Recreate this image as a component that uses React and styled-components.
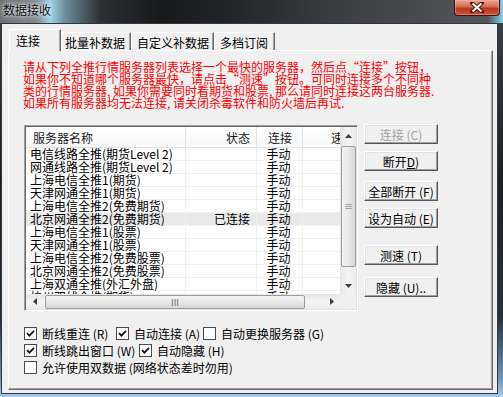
import React from "react";
import styled, { createGlobalStyle } from "styled-components";

const GlobalStyle = createGlobalStyle`
  html, body {
    margin: 0;
    padding: 0;
    background: #1e2124;
  }
  body {
    font-family: "Noto Sans CJK SC", "Liberation Sans", sans-serif;
  }
`;

const Window = styled.div`
    width: 503px;
    height: 397px;
    overflow: hidden;
    display: flex;
    flex-direction: column;
    background: linear-gradient(180deg, #3b4146 0%, #1d2023 45%, #24313c 80%, #6f9cc4 96%, #a9cbe9 100%);
    font-family: "Noto Sans CJK SC", "Liberation Sans", sans-serif;
    font-size: 12px;
    color: #000;
`

const TitleBar = styled.div`
    height: 23px;
    flex: none;
    display: flex;
    justify-content: space-between;
    align-items: flex-start;
    background: linear-gradient(90deg, #6c7074 0%, #80878c 7%, #9fd3e6 10%, #6d8d9a 13%, #2c2f32 20%, #17191b 32%, #25282b 48%, #3a3d40 66%, #48494c 82%, #54575a 97%, #7fd6f0 100%);
`

const Title = styled.div`
    padding: 3px 0 0 3px;
    font-size: 12px;
    line-height: 14px;
    color: #101010;
    text-shadow: 0 0 6px #fff, 0 0 3px rgba(255, 255, 255, 0.8);
`

const CloseButton = styled.div`
    width: 46px;
    height: 16px;
    margin-right: 3px;
    box-sizing: border-box;
    border: 1px solid #3a1008;
    border-top: none;
    border-radius: 0 0 4px 4px;
    background: linear-gradient(180deg, #e9a595 0%, #d66a52 45%, #b8361d 55%, #cc5336 100%);
    box-shadow: inset 0 0 0 1px rgba(255, 200, 180, 0.35);
    display: flex;
    align-items: center;
    justify-content: center;
`

const Client = styled.div`
    flex: 1;
    margin: 0 5px 3px 1px;
    background: #f0f0f0;
    border: 1px solid #30363b;
    padding: 5px 4px 3px 6px;
    display: flex;
    flex-direction: column;
`

const TabRow = styled.div`
    height: 21px;
    display: flex;
    align-items: flex-end;
    padding-left: 1px;
`

const Tab = styled.div`
    width: ${({ $w }) => $w}px;
    height: ${({ $active }) => ($active ? 22 : 18)}px;
    margin-bottom: ${({ $active }) => ($active ? -1 : 0)}px;
    position: relative;
    z-index: ${({ $active }) => ($active ? 1 : 0)};
    box-sizing: border-box;
    padding: ${({ $active }) => ($active ? "0 0 1px" : "1px 0 0")} ${({ $pl }) => $pl}px;
    background: #f0f0f0;
    border-top: 1px solid #fff;
    border-left: 1px solid #fff;
    border-right: 1px solid #696969;
    box-shadow: inset -1px 0 #a0a0a0;
    display: flex;
    align-items: center;
    white-space: nowrap;
    font-size: 12px;
`

const Panel = styled.div`
    flex: 1;
    border: 1px solid;
    border-color: #fff #696969 #696969 #fff;
    box-shadow: inset -1px -1px #a0a0a0;
    padding: 10px 0 0 14px;
    display: flex;
    flex-direction: column;
`

const Notice = styled.div`
    color: #ff0000;
    font-size: 12px;
    line-height: 12px;
    white-space: nowrap;
`

const NoticeLine = styled.div`
    height: 12px;
`

const Middle = styled.div`
    margin-top: 16px;
    margin-left: 1px;
    display: flex;
    gap: 6px;
`

const ListBox = styled.div`
    width: 334px;
    height: 186px;
    box-sizing: border-box;
    border: 1px solid;
    border-color: #a0a0a0 #fff #fff #a0a0a0;
    box-shadow: inset 1px 1px #696969, inset -1px -1px #e3e3e3;
    padding: 1px;
    display: grid;
    grid-template-columns: 1fr 16px;
    grid-template-rows: 1fr 15px;
`

const Viewport = styled.div`
    overflow: hidden;
    background: #fff;
`

const HeaderRow = styled.div`
    display: flex;
    height: 21px;
    background: linear-gradient(180deg, #ffffff 0%, #f7f8f9 100%);
    border-bottom: 1px solid #e2e3e5;
    box-sizing: border-box;
`

const HeaderCell = styled.div`
    flex: none;
    width: ${({ $w }) => $w}px;
    box-sizing: border-box;
    padding: 0 6px 0 7px;
    border-right: 1px solid #dfe1e4;
    display: flex;
    align-items: center;
    justify-content: ${({ $align }) => $align};
    white-space: nowrap;
    color: #1a1a1a;
`

const Row = styled.div`
    display: flex;
    height: 13px;
    background: ${({ $selected }) => ($selected ? "#e9e9e9" : "#fff")};
    border-bottom: 1px solid #f0f0f0;
    box-sizing: border-box;
`

const Cell = styled.div`
    flex: none;
    width: ${({ $w }) => $w}px;
    box-sizing: border-box;
    padding: 0 6px 0 4px;
    border-right: 1px solid #f0f0f0;
    display: flex;
    align-items: center;
    justify-content: ${({ $align }) => $align};
    white-space: nowrap;
    line-height: 12px;
`

const VScroll = styled.div`
    background: linear-gradient(90deg, #e6e6e6 0%, #f4f4f4 50%, #ececec 100%);
    display: flex;
    flex-direction: column;
`

const HScroll = styled.div`
    background: linear-gradient(180deg, #e6e6e6 0%, #f4f4f4 50%, #ececec 100%);
    display: flex;
`

const Corner = styled.div`
    background: #f0f0f0;
`

const ArrowBox = styled.div`
    flex: none;
    width: ${({ $w }) => $w}px;
    height: ${({ $h }) => $h}px;
    display: flex;
    align-items: center;
    justify-content: center;
`

const Track = styled.div`
    flex: 1;
`

const Thumb = styled.div`
    flex: none;
    box-sizing: border-box;
    border: 1px solid #9b9b9b;
    border-radius: 2px;
    display: flex;
    align-items: center;
    justify-content: center;
    color: #6a6a6a;
    font-size: 9px;
    line-height: 9px;
`

const VThumb = styled(Thumb)`
    height: 121px;
    margin: 2px 0 0 1px;
    width: 15px;
    background: linear-gradient(90deg, #f3f3f3 0%, #e8e8e8 50%, #d7d7d7 100%);
`

const HThumb = styled(Thumb)`
    width: 260px;
    margin: 1px 0 0 2px;
    height: 14px;
    background: linear-gradient(180deg, #f3f3f3 0%, #e8e8e8 50%, #d7d7d7 100%);
`

const ButtonColumn = styled.div`
    display: flex;
    flex-direction: column;
`

const Btn = styled.div`
    width: 74px;
    height: 20px;
    margin-top: ${({ $gap }) => $gap}px;
    box-sizing: border-box;
    border: 1px solid;
    border-color: #fff #555 #555 #fff;
    box-shadow: inset -1px -1px #a0a0a0, inset 1px 1px #e3e3e3;
    background: #f0f0f0;
    display: flex;
    align-items: center;
    justify-content: center;
    white-space: nowrap;
    color: ${({ $disabled }) => ($disabled ? "#a0a0a0" : "#000")};
`

const Checks = styled.div`
    margin-top: 14px;
    margin-left: 1px;
    display: flex;
    flex-direction: column;
`

const CheckRow = styled.div`
    height: 17px;
    display: flex;
    align-items: center;
`

const CheckItem = styled.div`
    width: ${({ $w }) => ($w ? `${$w}px` : "auto")};
    flex: none;
    display: flex;
    align-items: center;
    white-space: nowrap;
`

const Box = styled.div`
    width: 13px;
    height: 13px;
    box-sizing: border-box;
    border: 1px solid #4a4a4a;
    background: #fff;
    margin-right: 5px;
    display: flex;
    align-items: center;
    justify-content: center;
`

const columns = [
    { key: "name", title: "服务器名称", w: 160, align: "flex-start" },
    { key: "status", title: "状态", w: 71, align: "flex-end" },
    { key: "conn", title: "连接", w: 46, align: "center" },
    { key: "speed", title: "速度", w: 80, align: "center" },
];

const servers = [
    { name: "电信线路全推(期货Level 2)", conn: "手动" },
    { name: "网通线路全推(期货Level 2)", conn: "手动" },
    { name: "上海电信全推1(期货)", conn: "手动" },
    { name: "天津网通全推1(期货)", conn: "手动" },
    { name: "上海电信全推2(免费期货)", conn: "手动" },
    { name: "北京网通全推2(免费期货)", status: "已连接", conn: "手动", selected: true },
    { name: "上海电信全推1(股票)", conn: "手动" },
    { name: "天津网通全推1(股票)", conn: "手动" },
    { name: "上海电信全推2(免费股票)", conn: "手动" },
    { name: "北京网通全推2(免费股票)", conn: "手动" },
    { name: "上海双通全推(外汇外盘)", conn: "手动" },
    { name: "杭州双线全推(期货)", conn: "手动" },
];

const tabs = [
    { label: "连接", w: 52, pl: 6, active: true },
    { label: "批量补数据", w: 70, pl: 3 },
    { label: "自定义补数据", w: 83, pl: 5 },
    { label: "多档订阅", w: 61, pl: 5 },
];

const notice = [
    "请从下列全推行情服务器列表选择一个最快的服务器，然后点“连接”按钮，",
    "如果你不知道哪个服务器最快，请点击“测速”按钮。可同时连接多个不同种",
    "类的行情服务器, 如果你需要同时看期货和股票, 那么请同时连接这两台服务器.",
    "如果所有服务器均无法连接, 请关闭杀毒软件和防火墙后再试.",
];

const buttons = [
    { label: "连接 (C)", gap: -1, disabled: true },
    { label: <>断开<u>D</u>)</>, gap: 7 },
    { label: "全部断开 (F)", gap: 10 },
    { label: "设为自动 (E)", gap: 7 },
    { label: "测速 (T)", gap: 17 },
    { label: "隐藏 (U)..", gap: 12 },
];

const checkRows = [
    [
        { label: "断线重连 (R)", checked: true, w: 92 },
        { label: "自动连接 (A)", checked: true, w: 87 },
        { label: "自动更换服务器 (G)", checked: false },
    ],
    [
        { label: "断线跳出窗口 (W)", checked: true, w: 115 },
        { label: "自动隐藏 (H)", checked: true },
    ],
    [
        { label: "允许使用双数据 (网络状态差时勿用)", checked: false },
    ],
];

const Arrow = ({ dir }) => {
    const pts = {
        up: "0,4 7,4 3.5,0",
        down: "0,0 7,0 3.5,4",
        left: "4,0 4,7 0,3.5",
        right: "0,0 0,7 4,3.5",
    }[dir];
    const vertical = dir === "up" || dir === "down";
    return (
        <svg width={vertical ? 7 : 4} height={vertical ? 4 : 7} viewBox={vertical ? "0 0 7 4" : "0 0 4 7"}>
            <polygon points={pts} fill="#3c3c3c" />
        </svg>
    );
};

const Check = () => (
    <svg width="9" height="9" viewBox="0 0 9 9">
        <path d="M1 4.2 L3.4 6.6 L8 1.8" fill="none" stroke="#111" strokeWidth="1.8" />
    </svg>
);

const App = () => {
    return (
        <>
            <GlobalStyle />
            <Window>
                <TitleBar>
                    <Title>数据接收</Title>
                    <CloseButton>
                        <svg width="14" height="11" viewBox="0 0 14 11">
                            <path d="M2 1 L12 10 M12 1 L2 10" stroke="#4a1a10" strokeWidth="4" strokeLinecap="square" />
                            <path d="M2.5 1.5 L11.5 9.5 M11.5 1.5 L2.5 9.5" stroke="#fff" strokeWidth="2" />
                        </svg>
                    </CloseButton>
                </TitleBar>
                <Client>
                    <TabRow>
                        {tabs.map((t) => (
                            <Tab key={t.label} $w={t.w} $pl={t.pl} $active={t.active}>
                                {t.label}
                            </Tab>
                        ))}
                    </TabRow>
                    <Panel>
                        <Notice>
                            {notice.map((line) => (
                                <NoticeLine key={line}>{line}</NoticeLine>
                            ))}
                        </Notice>
                        <Middle>
                            <ListBox>
                                <Viewport>
                                    <HeaderRow>
                                        {columns.map((c) => (
                                            <HeaderCell key={c.key} $w={c.w} $align={c.align}>
                                                {c.title}
                                            </HeaderCell>
                                        ))}
                                    </HeaderRow>
                                    {servers.map((s) => (
                                        <Row key={s.name} $selected={s.selected}>
                                            {columns.map((c) => (
                                                <Cell key={c.key} $w={c.w} $align={c.align}>
                                                    {s[c.key] || ""}
                                                </Cell>
                                            ))}
                                        </Row>
                                    ))}
                                </Viewport>
                                <VScroll>
                                    <ArrowBox $w={16} $h={17}><Arrow dir="up" /></ArrowBox>
                                    <VThumb>≡</VThumb>
                                    <Track />
                                    <ArrowBox $w={16} $h={17}><Arrow dir="down" /></ArrowBox>
                                </VScroll>
                                <HScroll>
                                    <ArrowBox $w={17} $h={15}><Arrow dir="left" /></ArrowBox>
                                    <HThumb>III</HThumb>
                                    <Track />
                                    <ArrowBox $w={17} $h={15}><Arrow dir="right" /></ArrowBox>
                                </HScroll>
                                <Corner />
                            </ListBox>
                            <ButtonColumn>
                                {buttons.map((b, i) => (
                                    <Btn key={i} $gap={b.gap} $disabled={b.disabled}>
                                        {b.label}
                                    </Btn>
                                ))}
                            </ButtonColumn>
                        </Middle>
                        <Checks>
                            {checkRows.map((row, i) => (
                                <CheckRow key={i}>
                                    {row.map((c) => (
                                        <CheckItem key={c.label} $w={c.w}>
                                            <Box>{c.checked && <Check />}</Box>
                                            {c.label}
                                        </CheckItem>
                                    ))}
                                </CheckRow>
                            ))}
                        </Checks>
                    </Panel>
                </Client>
            </Window>
        </>
    );
};

export default App;
